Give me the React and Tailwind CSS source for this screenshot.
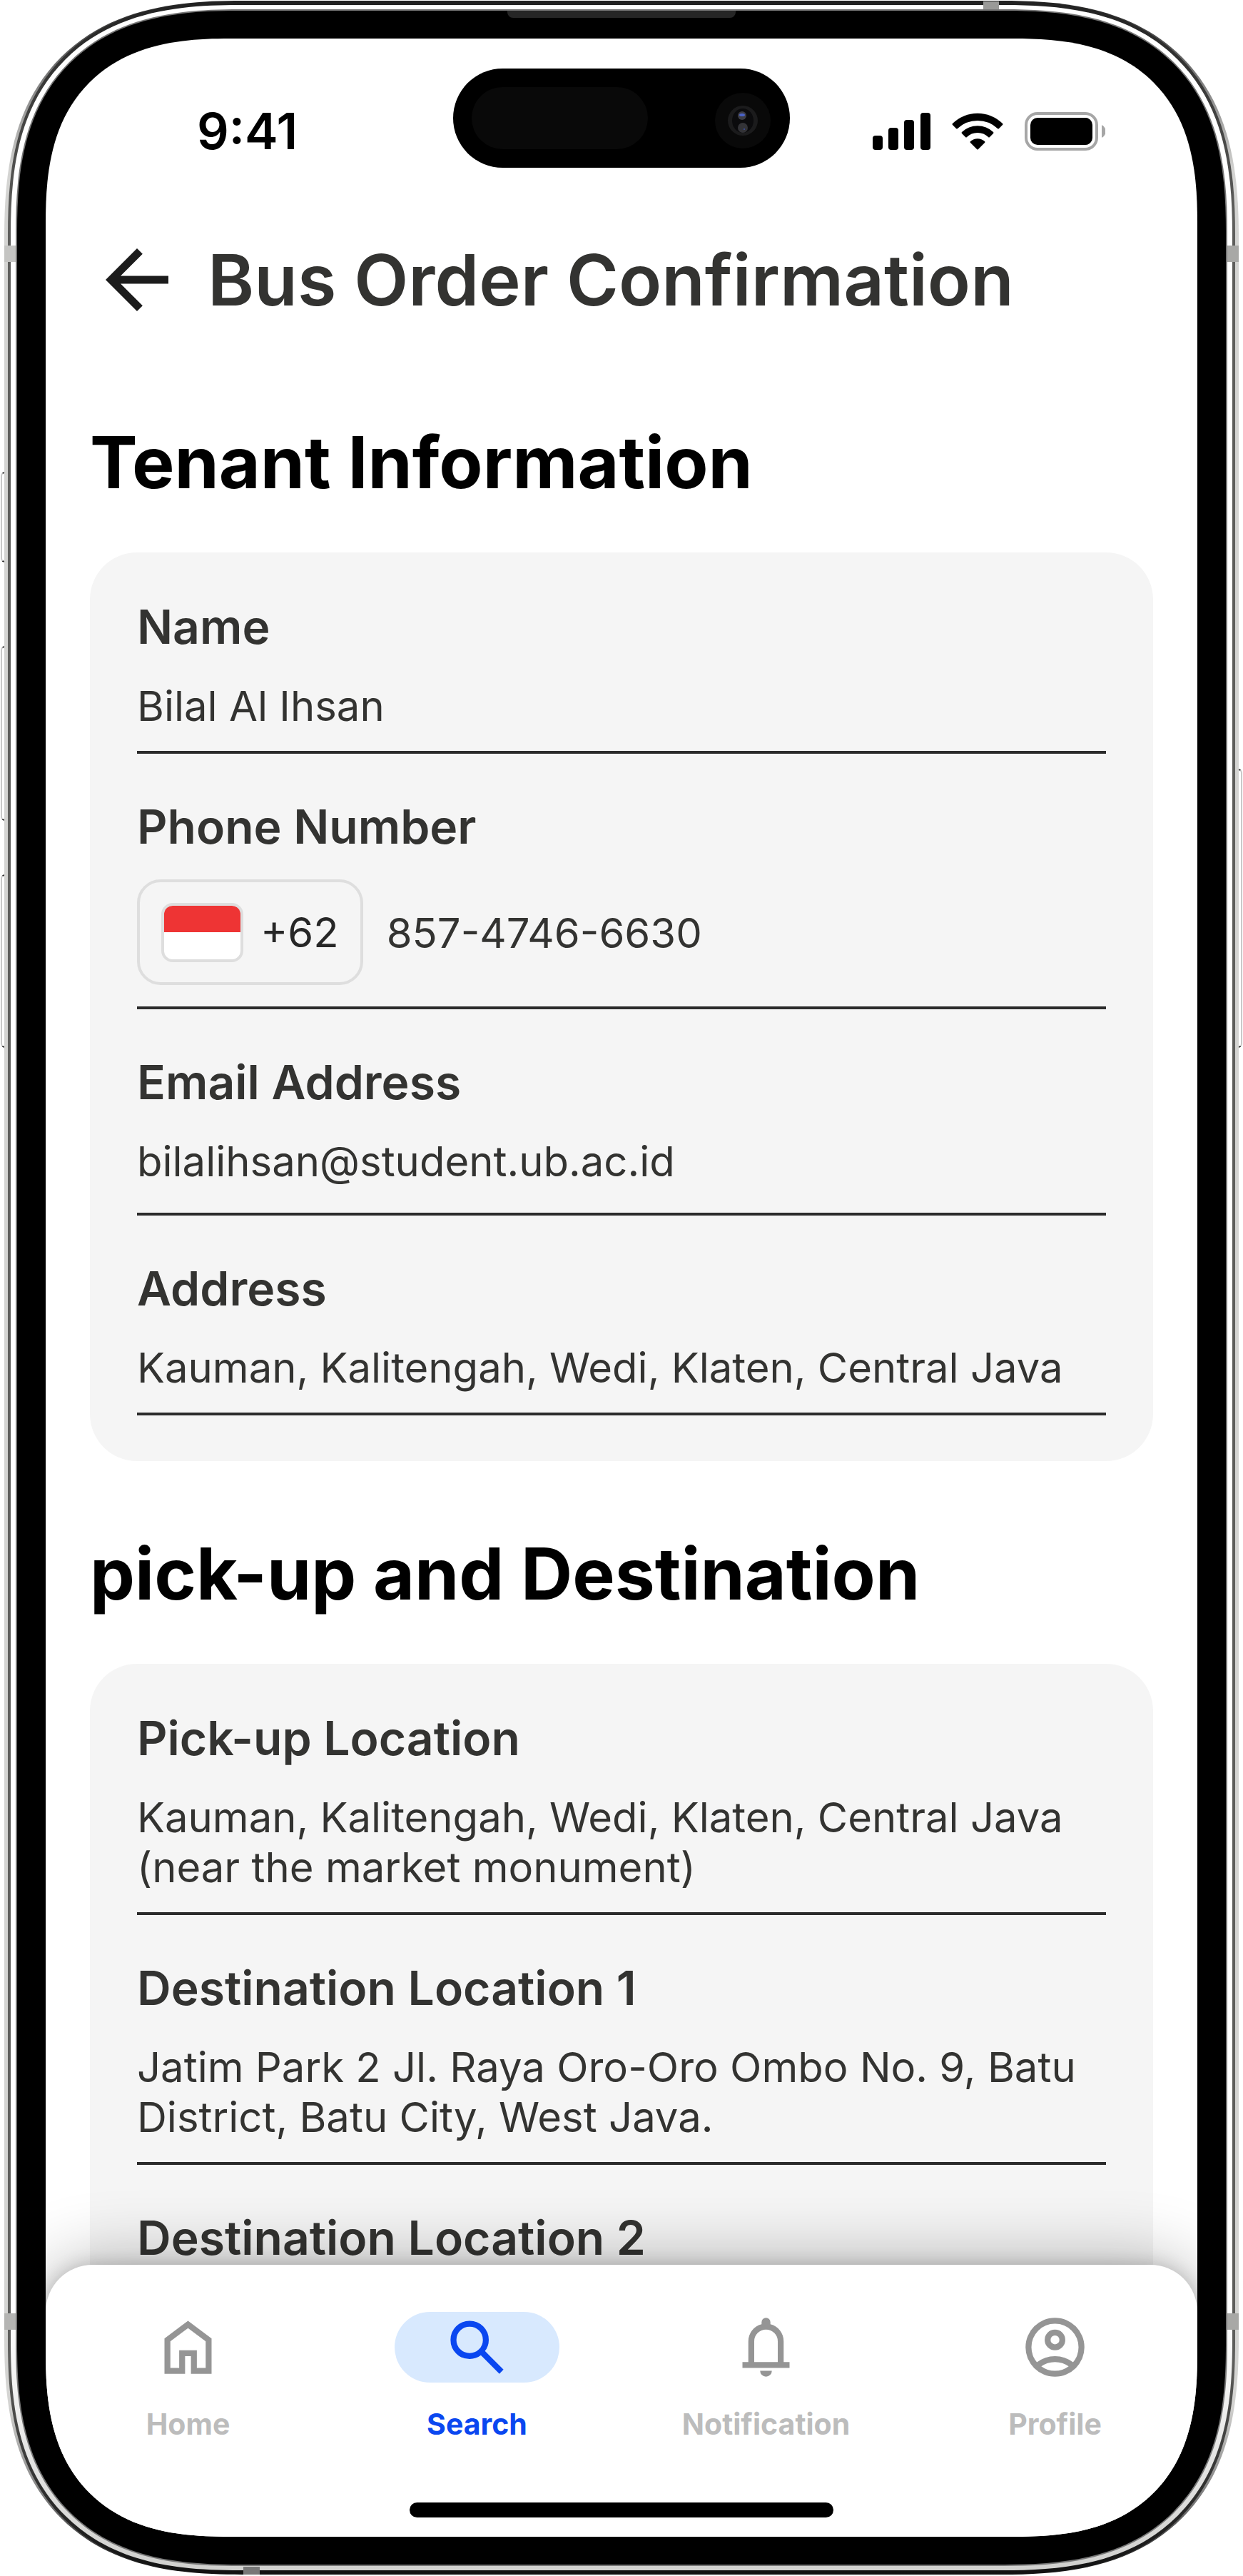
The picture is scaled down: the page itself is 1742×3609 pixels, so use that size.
import React, { useState } from 'react';

const ICONS = {
    home: 'M240-200h120v-240h240v240h120v-360L480-740 240-560v360Zm-80 80v-480l320-240 320 240v480H520v-240h-80v240H160Z',
    search: 'M784-120 532-372q-30 24-69 38t-83 14q-109 0-184.5-75.5T120-580q0-109 75.5-184.5T380-840q109 0 184.5 75.5T640-580q0 44-14 83t-38 69l252 252-56 56ZM380-400q75 0 127.5-52.5T560-580q0-75-52.5-127.5T380-760q-75 0-127.5 52.5T200-580q0 75 52.5 127.5T380-400Z',
    notification: 'M160-200v-80h80v-280q0-83 50-147.5T420-792v-28q0-25 17.5-42.5T480-880q25 0 42.5 17.5T540-820v28q80 20 130 84.5T720-560v280h80v80H160Zm320 120q-33 0-56.5-23.5T400-160h160q0 33-23.5 56.5T480-80ZM320-280h320v-280q0-66-47-113t-113-47q-66 0-113 47t-47 113v280Z',
    profile: 'M234-276q51-39 114-61.5T480-360q69 0 132 22.5T726-276q35-41 54.5-93T800-480q0-133-93.5-226.5T480-800q-133 0-226.5 93.5T160-480q0 59 19.5 111t54.5 93Zm246-164q-59 0-99.5-40.5T340-580q0-59 40.5-99.5T480-720q59 0 99.5 40.5T620-580q0 59-40.5 99.5T480-440Zm0 360q-83 0-156-31.5T197-197q-54-54-85.5-127T80-480q0-83 31.5-156T197-763q54-54 127-85.5T480-880q83 0 156 31.5T763-763q54 54 85.5 127T880-480q0 83-31.5 156T763-197q-54 54-127 85.5T480-80Zm0-80q53 0 100-15.5t86-44.5q-39-29-86-44.5T480-280q-53 0-100 15.5T294-220q39 29 86 44.5T480-160Zm0-360q26 0 43-17t17-43q0-26-17-43t-43-17q-26 0-43 17t-17 43q0 26 17 43t43 17Z',
    back: 'M313-440 537-216l-57 56-320-320 320-320 57 56-224 224h487v80H313Z',
};

const Icon = ({ name, className }) => (
    <svg viewBox="0 -960 960 960" fill="currentColor" className={className} aria-hidden="true">
        <path d={ICONS[name]} />
    </svg>
);

const tabs = [
    { id: 'home', label: 'Home' },
    { id: 'search', label: 'Search' },
    { id: 'notification', label: 'Notification' },
    { id: 'profile', label: 'Profile' },
];

const StatusBar = () => (
    <div className="grid h-[181px] grid-cols-[1fr_472px_1fr] pt-[42px]">
        <div className="flex h-[139px] items-center pt-[36px] pl-[212px] text-[70px] leading-[86px] font-semibold text-black">9:41</div>
        <div className="relative h-[139px] rounded-full bg-black">
            <div className="absolute top-[26px] left-[26px] h-[87px] w-[247px] rounded-full bg-[#090909]" />
            <svg viewBox="0 0 80 80" className="absolute top-[33px] right-[26px] size-[80px]" aria-hidden="true">
                <circle cx="40" cy="40" r="39" fill="#090909" />
                <circle cx="40" cy="40" r="21" fill="#1b1b1c" />
                <ellipse cx="40" cy="40" rx="15" ry="17" fill="#0b0b0d" />
                <circle cx="39" cy="33" r="6" fill="#3c3c44" />
                <circle cx="40" cy="50" r="7" fill="#333337" />
                <ellipse cx="39" cy="32" rx="4" ry="2" fill="#4a62c8" />
                <circle cx="42" cy="52" r="1" fill="#3d52b0" />
            </svg>
        </div>
        <div className="flex h-[139px] items-center justify-end gap-[30px] pt-[36px] pr-[129px] text-black">
            <svg viewBox="0 0 81 52" className="h-[52px] w-[81px]" fill="currentColor" aria-hidden="true">
                <rect x="0" y="32" width="14" height="20" rx="4" />
                <rect x="22" y="21" width="14" height="31" rx="4" />
                <rect x="44" y="10" width="14" height="42" rx="4" />
                <rect x="67" y="0" width="14" height="52" rx="4" />
            </svg>
            <svg viewBox="0 0 72 52" className="h-[52px] w-[72px]" fill="currentColor" aria-hidden="true">
                <path d="M36 11a41 41 0 0 1 28 11q1 1 2 0l5-5q1-1 0-2a50 50 0 0 0-70 0q-1 1 0 2l5 5q1 1 2 0a41 41 0 0 1 28-11Z" />
                <path d="M36 28q9 0 15 6 1 1 2 0l5-5q1-1 0-2a32 32 0 0 0-44 0q-1 1 0 2l5 5q1 1 2 0 6-6 15-6Z" />
                <path d="M46 42q1-1 0-2a15 15 0 0 0-20 0q-1 1 0 2l9 9q1 1 2 0Z" />
            </svg>
            <svg viewBox="0 0 113 54" className="h-[54px] w-[113px]" aria-hidden="true">
                <rect x="2" y="2" width="99" height="50" rx="16" fill="none" stroke="#a6a6a6" strokeWidth="4" />
                <rect x="8" y="8" width="87" height="38" rx="10" fill="#000" />
                <path d="M108 18a10 10 0 0 1 0 18Z" fill="#a6a6a6" />
            </svg>
        </div>
    </div>
);

const fieldStyle = 'block w-full resize-none overflow-hidden pt-[2px] text-[58px] leading-[70px] outline-none';

const Field = ({ id, label, value, type = 'text', rows, lineClass = 'pb-[28px]', children }) => (
    <div className={`border-b-4 border-[#2b2b2b] ${lineClass}`}>
        <label htmlFor={id} className="mb-[34px] block text-[66px] leading-[80px] font-semibold">{label}</label>
        {children || (rows ? (
            <textarea id={id} rows={rows} defaultValue={value} readOnly className={fieldStyle} />
        ) : (
            <input id={id} type={type} defaultValue={value} readOnly className={fieldStyle} />
        ))}
    </div>
);

const Section = ({ title, children }) => (
    <section>
        <h2 className="mb-[66px] text-[100px] leading-[120px] font-bold text-black">{title}</h2>
        <div className="flex flex-col gap-[62px] rounded-[66px] bg-[#f5f5f5] px-[66px] py-[64px]">{children}</div>
    </section>
);

const BottomNav = () => {
    const [active, setActive] = useState('search');

    return (
        <div className="absolute inset-x-0 bottom-0 flex flex-col items-center rounded-t-[66px] bg-white pb-[27px] shadow-[0_0_100px_rgba(0,0,0,0.32),0_0_24px_rgba(0,0,0,0.18)]">
            <nav className="flex w-full justify-between px-[84px] pt-[66px] pb-[85px]">
                {tabs.map((tab) => (
                    <button
                        key={tab.id}
                        type="button"
                        onClick={() => setActive(tab.id)}
                        className={`flex w-[231px] flex-col items-center gap-[33px] text-[41px] leading-[50px] font-bold ${active === tab.id ? 'text-[#0a47f0]' : 'text-[#bcbcbc]'}`}
                    >
                        <span className={`flex h-[99px] w-full items-center justify-center rounded-full ${active === tab.id ? 'bg-[#d8e9fe]' : 'text-[#959595]'}`}>
                            <Icon name={tab.id} className="size-[99px]" />
                        </span>
                        {tab.label}
                    </button>
                ))}
            </nav>
            <div className="h-[21px] w-[594px] rounded-full bg-black" />
        </div>
    );
};

const Screen = () => (
    <div className="relative h-full overflow-hidden rounded-[258px] bg-white [corner-shape:superellipse(1.35)]">
        <StatusBar />
        <header className="flex items-center gap-[33px] px-[62px] pt-[91px]">
            <button type="button" aria-label="Back" className="text-[#1c1c1c]">
                <Icon name="back" className="size-[132px]" />
            </button>
            <h1 className="text-[99px] leading-[120px] font-semibold">Bus Order Confirmation</h1>
        </header>
        <main className="flex flex-col gap-[98px] px-[62px] pt-[130px]">
            <Section title="Tenant Information">
                <Field id="name" label="Name" value="Bilal Al Ihsan" />
                <Field id="phone" label="Phone Number" lineClass="pb-[30px]">
                    <div className="flex items-center gap-[33px]">
                        <button type="button" className="flex h-[148px] shrink-0 items-center gap-[24px] rounded-[33px] border-4 border-[#dedede] px-[30px] text-[58px] leading-[70px] text-[#262626]">
                            <span className="flex h-[83px] w-[115px] flex-col overflow-hidden rounded-[16px] border-4 border-[#dedede] bg-white">
                                <span className="h-1/2 bg-[#ee3434]" />
                            </span>
                            +62
                        </button>
                        <input id="phone" type="tel" defaultValue="857-4746-6630" readOnly className={fieldStyle} />
                    </div>
                </Field>
                <Field id="email" label="Email Address" type="email" value="bilalihsan@student.ub.ac.id" lineClass="pb-[37px]" />
                <Field id="address" label="Address" value="Kauman, Kalitengah, Wedi, Klaten, Central Java" />
            </Section>
            <Section title="pick-up and Destination">
                <Field id="pickup" label="Pick-up Location" rows={2} value="Kauman, Kalitengah, Wedi, Klaten, Central Java (near the market monument)" />
                <Field id="destination1" label="Destination Location 1" rows={2} value="Jatim Park 2 Jl. Raya Oro-Oro Ombo No. 9, Batu District, Batu City, West Java." />
                <Field id="destination2" label="Destination Location 2" rows={2} value="" />
            </Section>
        </main>
        <BottomNav />
    </div>
);

const sideButton = 'absolute w-[12px] rounded-[6px] border-2 border-[#c9c9c9] border-y-[#333] bg-white';

export default function App() {
    return (
        <div className="relative h-screen min-h-[1200px] overflow-hidden bg-white px-[6px] pt-px pb-[2px] font-['Inter',sans-serif] text-[#333331]">
            <div className={`${sideButton} top-[661px] left-px h-[127px]`} />
            <div className={`${sideButton} top-[905px] left-px h-[245px]`} />
            <div className={`${sideButton} top-[1225px] left-px h-[243px]`} />
            <div className={`${sideButton} top-[1077px] right-px h-[391px]`} />

            {/* metal rim, from the outside in */}
            <div className="relative h-full rounded-[333px] bg-[linear-gradient(#222,#777_100px,#d4d4d2_240px,#d4d4d2_calc(100%-240px),#777_calc(100%-100px),#111)] px-[5px] py-px [corner-shape:superellipse(1.35)]">
                <div className="h-full rounded-[327px] bg-[linear-gradient(#222,#5e5e5c_300px,#5e5e5c_calc(100%-300px),#111)] px-[4px] py-[5px] [corner-shape:superellipse(1.35)]">
                    <div className="h-full rounded-[321px] bg-[linear-gradient(#fff_90%,#d0d0ce)] px-[7px] py-[6px] [corner-shape:superellipse(1.35)]">
                        <div className="h-full rounded-[313px] bg-[#777] p-[2px] [corner-shape:superellipse(1.35)]">
                            <div className="relative h-full rounded-[310px] bg-black px-[40px] pt-[39px] pb-[39px] [corner-shape:superellipse(1.35)]">
                                <div className="absolute top-0 left-1/2 h-[10px] w-[320px] -translate-x-1/2 rounded-b-[8px] bg-[#262626]" />
                                <Screen />
                            </div>
                        </div>
                    </div>
                </div>
                {/* antenna bands */}
                <div className="absolute top-px right-[336px] h-[11px] w-[22px] bg-[#9a9a98]" />
                <div className="absolute bottom-0 left-[335px] h-[11px] w-[23px] bg-[#777]" />
                <div className="absolute top-[343px] left-0 h-[23px] w-[16px] bg-[#c4c4c2]" />
                <div className="absolute top-[343px] right-0 h-[23px] w-[16px] bg-[#a8a8a6]" />
                <div className="absolute bottom-[343px] left-0 h-[23px] w-[16px] bg-[#b4b4b2]" />
                <div className="absolute right-0 bottom-[343px] h-[23px] w-[16px] bg-[#a8a8a6]" />
            </div>
        </div>
    );
}
